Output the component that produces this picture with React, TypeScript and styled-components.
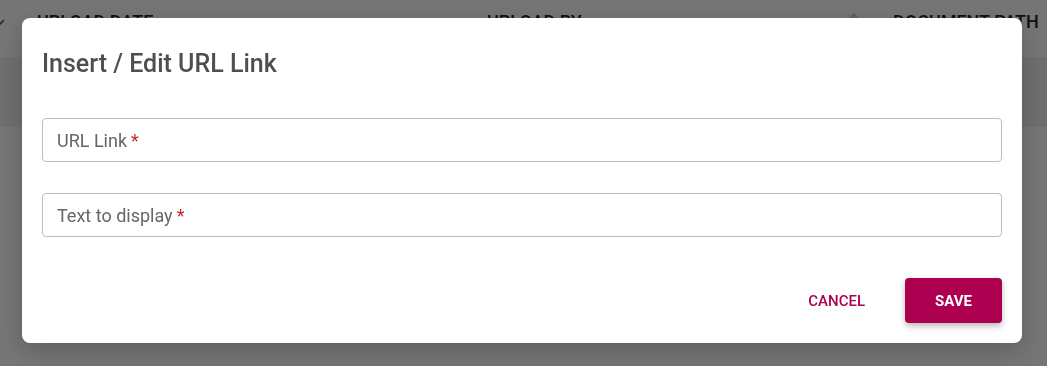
import React, { FC } from "react";
import styled, { createGlobalStyle } from "styled-components";

const GlobalStyle = createGlobalStyle`
  html, body {
    margin: 0;
    padding: 0;
    background: #ffffff;
    font-family: Roboto, "Liberation Sans", Arial, sans-serif;
  }
`;

const Page = styled.div`
  width: 1047px;
  height: 366px;
  overflow: hidden;
  background: #ffffff;
`;

const HeaderRow = styled.div`
  display: flex;
  height: 57px;
  padding-top: 10px;
  box-sizing: border-box;
  margin-left: -6px;
`;

const HeaderCell = styled.div<{ $width: number }>`
  display: flex;
  align-items: flex-start;
  width: ${(p) => p.$width}px;
  flex-shrink: 0;
  font-size: 18px;
  line-height: 24px;
  font-weight: 500;
  color: #262626;
  text-transform: uppercase;
  white-space: nowrap;
`;

const HeaderIcon = styled.span`
  display: flex;
  flex-shrink: 0;
  width: 43px;
  padding-top: 6px;
  color: #555;
`;

const SortIcon = styled.span`
  display: flex;
  margin-left: auto;
  margin-right: 32px;
  padding-top: 2px;
  color: #cfcfcf;
`;

const Band = styled.div`
  height: 70px;
  background: #f0f0f0;
`;

const Overlay = styled.div`
  position: fixed;
  inset: 0;
  display: flex;
  align-items: flex-start;
  padding: 18px 0 0 22px;
  background: rgba(0, 0, 0, 0.54);
`;

const Dialog = styled.div`
  width: 1000px;
  box-sizing: border-box;
  padding: 31px 20px 20px;
  background: #ffffff;
  border-radius: 8px;
  box-shadow: 0 8px 24px rgba(0, 0, 0, 0.2);
`;

const Title = styled.h2`
  margin: 0 0 39px;
  font-size: 25px;
  line-height: 30px;
  font-weight: 500;
  color: #4f4f4f;
`;

const Fields = styled.div`
  display: flex;
  flex-direction: column;
  gap: 31px;
`;

const Field = styled.label`
  display: flex;
  align-items: center;
  height: 44px;
  box-sizing: border-box;
  padding: 0 14px;
  border: 1px solid #bdbdbd;
  border-radius: 4px;
  font-size: 18px;
  color: #666666;
  cursor: text;
`;

const Required = styled.span`
  margin-left: 4px;
  color: #c62828;
`;

const Actions = styled.div`
  display: flex;
  justify-content: flex-end;
  align-items: center;
  gap: 24px;
  margin-top: 41px;
`;

const Button = styled.button<{ $primary?: boolean }>`
  height: 45px;
  min-width: ${(p) => (p.$primary ? "97px" : "auto")};
  padding: 0 16px;
  border: none;
  border-radius: 4px;
  font-family: Roboto, "Liberation Sans", Arial, sans-serif;
  font-size: 15px;
  font-weight: ${(p) => (p.$primary ? 700 : 500)};
  text-transform: uppercase;
  color: ${(p) => (p.$primary ? "#ffffff" : "#ad0050")};
  background: ${(p) => (p.$primary ? "#ad0050" : "transparent")};
  box-shadow: ${(p) =>
    p.$primary ? "0 3px 6px rgba(0, 0, 0, 0.28)" : "none"};
  cursor: pointer;
`;

const fields = ["URL Link", "Text to display"];

const App: FC = () => {
  return (
    <Page>
      <GlobalStyle />
      <HeaderRow>
        <HeaderIcon>
          <svg width="12" height="12" viewBox="0 0 12 12" fill="none">
            <path d="M2 4l4 4 4-4" stroke="currentColor" strokeWidth="1.6" />
          </svg>
        </HeaderIcon>
        <HeaderCell $width={450}>Upload date</HeaderCell>
        <HeaderCell $width={406}>
          Upload by
          <SortIcon>
            <svg width="14" height="14" viewBox="0 0 14 14" fill="none">
              <path d="M7 12V2M3 6l4-4 4 4" stroke="currentColor" strokeWidth="1.6" />
            </svg>
          </SortIcon>
        </HeaderCell>
        <HeaderCell $width={200}>Document path</HeaderCell>
      </HeaderRow>
      <Band />
      <Overlay>
        <Dialog>
          <Title>Insert / Edit URL Link</Title>
          <Fields>
            {fields.map((label) => (
              <Field key={label}>
                {label}
                <Required>*</Required>
              </Field>
            ))}
          </Fields>
          <Actions>
            <Button>Cancel</Button>
            <Button $primary>Save</Button>
          </Actions>
        </Dialog>
      </Overlay>
    </Page>
  );
};

export default App;
